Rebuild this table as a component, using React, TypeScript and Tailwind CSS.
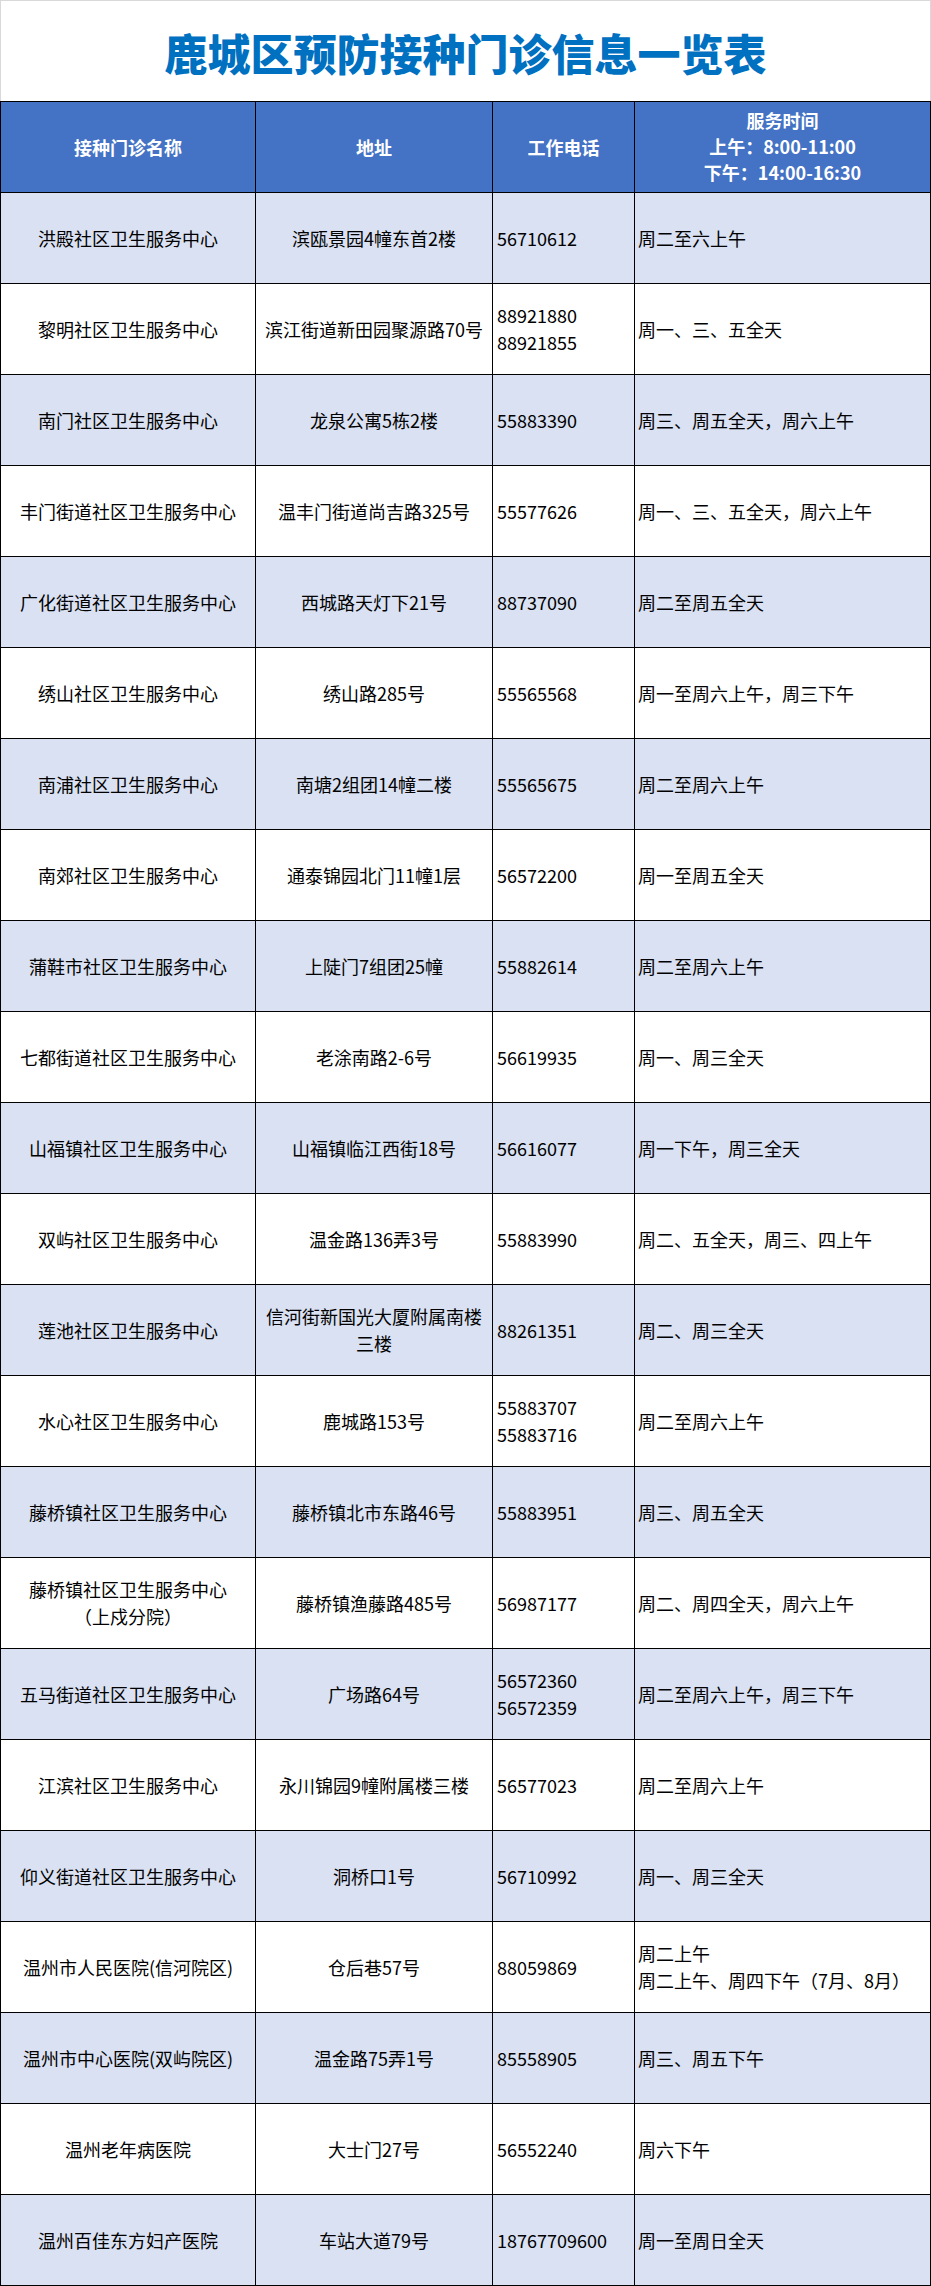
import React from "react";

type Row = {
  name: React.ReactNode;
  addr: React.ReactNode;
  phone: string[];
  time: string[];
};

const rows: Row[] = [
  { name: "洪殿社区卫生服务中心", addr: "滨瓯景园4幢东首2楼", phone: ["56710612"], time: ["周二至六上午"] },
  { name: "黎明社区卫生服务中心", addr: "滨江街道新田园聚源路70号", phone: ["88921880", "88921855"], time: ["周一、三、五全天"] },
  { name: "南门社区卫生服务中心", addr: "龙泉公寓5栋2楼", phone: ["55883390"], time: ["周三、周五全天，周六上午"] },
  { name: "丰门街道社区卫生服务中心", addr: "温丰门街道尚吉路325号", phone: ["55577626"], time: ["周一、三、五全天，周六上午"] },
  { name: "广化街道社区卫生服务中心", addr: "西城路天灯下21号", phone: ["88737090"], time: ["周二至周五全天"] },
  { name: "绣山社区卫生服务中心", addr: "绣山路285号", phone: ["55565568"], time: ["周一至周六上午，周三下午"] },
  { name: "南浦社区卫生服务中心", addr: "南塘2组团14幢二楼", phone: ["55565675"], time: ["周二至周六上午"] },
  { name: "南郊社区卫生服务中心", addr: "通泰锦园北门11幢1层", phone: ["56572200"], time: ["周一至周五全天"] },
  { name: "蒲鞋市社区卫生服务中心", addr: "上陡门7组团25幢", phone: ["55882614"], time: ["周二至周六上午"] },
  { name: "七都街道社区卫生服务中心", addr: "老涂南路2-6号", phone: ["56619935"], time: ["周一、周三全天"] },
  { name: "山福镇社区卫生服务中心", addr: "山福镇临江西街18号", phone: ["56616077"], time: ["周一下午，周三全天"] },
  { name: "双屿社区卫生服务中心", addr: "温金路136弄3号", phone: ["55883990"], time: ["周二、五全天，周三、四上午"] },
  {
    name: "莲池社区卫生服务中心",
    addr: (
      <>
        信河街新国光大厦附属南楼
        <br />
        三楼
      </>
    ),
    phone: ["88261351"],
    time: ["周二、周三全天"],
  },
  { name: "水心社区卫生服务中心", addr: "鹿城路153号", phone: ["55883707", "55883716"], time: ["周二至周六上午"] },
  { name: "藤桥镇社区卫生服务中心", addr: "藤桥镇北市东路46号", phone: ["55883951"], time: ["周三、周五全天"] },
  {
    name: (
      <>
        藤桥镇社区卫生服务中心
        <br />
        （上戍分院）
      </>
    ),
    addr: "藤桥镇渔藤路485号",
    phone: ["56987177"],
    time: ["周二、周四全天，周六上午"],
  },
  { name: "五马街道社区卫生服务中心", addr: "广场路64号", phone: ["56572360", "56572359"], time: ["周二至周六上午，周三下午"] },
  { name: "江滨社区卫生服务中心", addr: "永川锦园9幢附属楼三楼", phone: ["56577023"], time: ["周二至周六上午"] },
  { name: "仰义街道社区卫生服务中心", addr: "洞桥口1号", phone: ["56710992"], time: ["周一、周三全天"] },
  { name: "温州市人民医院(信河院区)", addr: "仓后巷57号", phone: ["88059869"], time: ["周二上午", "周二上午、周四下午（7月、8月）"] },
  { name: "温州市中心医院(双屿院区)", addr: "温金路75弄1号", phone: ["85558905"], time: ["周三、周五下午"] },
  { name: "温州老年病医院", addr: "大士门27号", phone: ["56552240"], time: ["周六下午"] },
  { name: "温州百佳东方妇产医院", addr: "车站大道79号", phone: ["18767709600"], time: ["周一至周日全天"] },
];

export default function App() {
  return (
    <div className="w-[931px] bg-white text-black font-['Noto_Sans_CJK_SC',sans-serif]">
      <div className="h-[101px] border-t border-l border-r border-[#d9d9d9] flex items-center justify-center pt-[3px]">
        <h1 className="text-[43px] font-black text-[#0070c0] leading-none">鹿城区预防接种门诊信息一览表</h1>
      </div>
      <div className="grid grid-cols-[256px_237px_142px_296px] h-[92px] border-t border-black bg-[#4472c4] text-white font-bold text-[18px]">
        <div className="border-l border-r border-b border-black flex items-center justify-center">接种门诊名称</div>
        <div className="border-r border-b border-black flex items-center justify-center">地址</div>
        <div className="border-r border-b border-black flex items-center justify-center">工作电话</div>
        <div className="border-r border-b border-black flex flex-col items-center justify-center leading-[26px] pb-[2px]">
          <div>服务时间</div>
          <div>上午：8:00-11:00</div>
          <div>下午：14:00-16:30</div>
        </div>
      </div>
      {rows.map((r, i) => (
        <div
          key={i}
          className={
            "grid grid-cols-[256px_237px_142px_296px] h-[91px] text-[18px] leading-[27px] " +
            (i % 2 === 0 ? "bg-[#d9e1f2]" : "bg-white")
          }
        >
          <div className="border-l border-r border-b border-black flex items-center justify-center text-center px-1">
            <div>{r.name}</div>
          </div>
          <div className="border-r border-b border-black flex items-center justify-center text-center px-1">
            <div>{r.addr}</div>
          </div>
          <div className="border-r border-b border-black flex flex-col justify-center pl-[4px]">
            {r.phone.map((p) => (
              <div key={p}>{p}</div>
            ))}
          </div>
          <div className="border-r border-b border-black flex flex-col justify-center pl-[3px]">
            {r.time.map((t, j) => (
              <div key={j}>{t}</div>
            ))}
          </div>
        </div>
      ))}
    </div>
  );
}
